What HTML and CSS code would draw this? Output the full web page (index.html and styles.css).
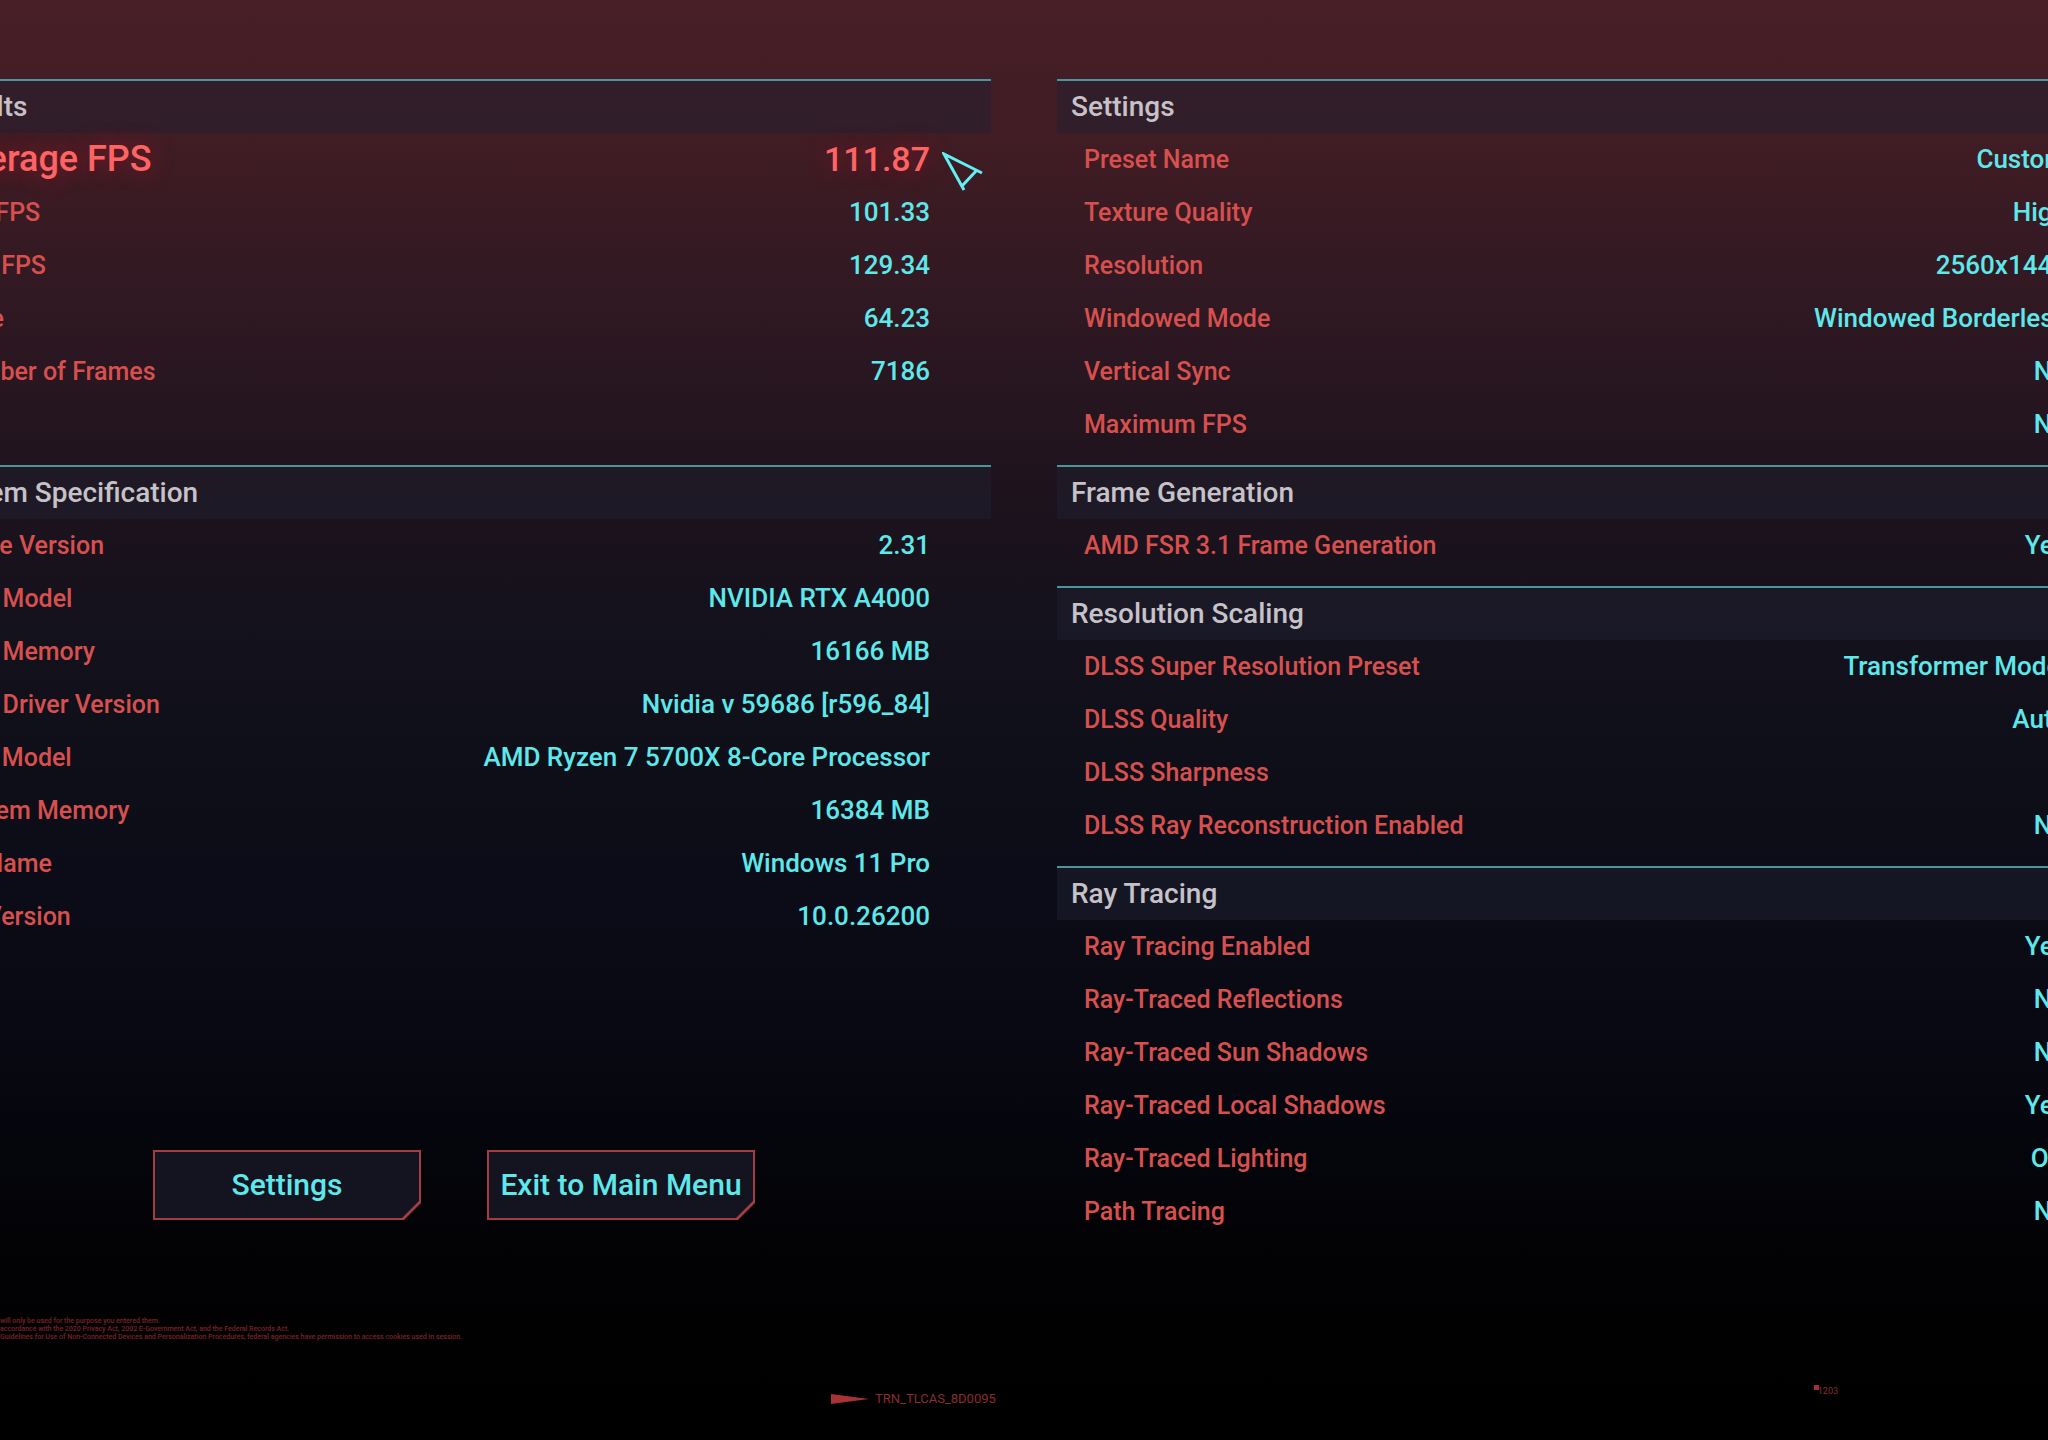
FILE: index.html
```
<!DOCTYPE html>
<html lang="en">
<head>
  <meta charset="utf-8">
  <title>Benchmark Results</title>
  <link rel="stylesheet" href="styles.css">
</head>
<body>
  <main class="screen">
    <div class="columns">
      <div class="column">
        <section class="panel panel-results">
          <h2>Results</h2>
          <dl>
            <div class="row highlight"><dt>Average FPS</dt><dd>111.87</dd></div>
            <div class="row"><dt>Min FPS</dt><dd>101.33</dd></div>
            <div class="row"><dt>Max FPS</dt><dd>129.34</dd></div>
            <div class="row"><dt>Time</dt><dd>64.23</dd></div>
            <div class="row"><dt>Number of Frames</dt><dd>7186</dd></div>
          </dl>
        </section>
        <section class="panel">
          <h2>System Specification</h2>
          <dl>
            <div class="row"><dt>Game Version</dt><dd>2.31</dd></div>
            <div class="row"><dt>GPU Model</dt><dd>NVIDIA RTX A4000</dd></div>
            <div class="row"><dt>GPU Memory</dt><dd>16166 MB</dd></div>
            <div class="row"><dt>GPU Driver Version</dt><dd>Nvidia v 59686 [r596_84]</dd></div>
            <div class="row"><dt>CPU Model</dt><dd>AMD Ryzen 7 5700X 8-Core Processor</dd></div>
            <div class="row"><dt>System Memory</dt><dd>16384 MB</dd></div>
            <div class="row"><dt>OS Name</dt><dd>Windows 11 Pro</dd></div>
            <div class="row"><dt>OS Version</dt><dd>10.0.26200</dd></div>
          </dl>
        </section>
        <div class="actions">
          <button type="button"><span>Settings</span></button>
          <button type="button"><span>Exit to Main Menu</span></button>
        </div>
      </div>

      <div class="column">
        <section class="panel">
          <h2>Settings</h2>
          <dl>
            <div class="row"><dt>Preset Name</dt><dd>Custom</dd></div>
            <div class="row"><dt>Texture Quality</dt><dd>High</dd></div>
            <div class="row"><dt>Resolution</dt><dd>2560x1440</dd></div>
            <div class="row"><dt>Windowed Mode</dt><dd>Windowed Borderless</dd></div>
            <div class="row"><dt>Vertical Sync</dt><dd>No</dd></div>
            <div class="row"><dt>Maximum FPS</dt><dd>No</dd></div>
          </dl>
        </section>
        <section class="panel">
          <h2>Frame Generation</h2>
          <dl>
            <div class="row"><dt>AMD FSR 3.1 Frame Generation</dt><dd>Yes</dd></div>
          </dl>
        </section>
        <section class="panel">
          <h2>Resolution Scaling</h2>
          <dl>
            <div class="row"><dt>DLSS Super Resolution Preset</dt><dd>Transformer Model</dd></div>
            <div class="row"><dt>DLSS Quality</dt><dd>Auto</dd></div>
            <div class="row"><dt>DLSS Sharpness</dt><dd></dd></div>
            <div class="row"><dt>DLSS Ray Reconstruction Enabled</dt><dd>No</dd></div>
          </dl>
        </section>
        <section class="panel">
          <h2>Ray Tracing</h2>
          <dl>
            <div class="row"><dt>Ray Tracing Enabled</dt><dd>Yes</dd></div>
            <div class="row"><dt>Ray-Traced Reflections</dt><dd>No</dd></div>
            <div class="row"><dt>Ray-Traced Sun Shadows</dt><dd>No</dd></div>
            <div class="row"><dt>Ray-Traced Local Shadows</dt><dd>Yes</dd></div>
            <div class="row"><dt>Ray-Traced Lighting</dt><dd>Off</dd></div>
            <div class="row"><dt>Path Tracing</dt><dd>No</dd></div>
          </dl>
        </section>
      </div>
    </div>

    <div class="legal">
      <p>will only be used for the purpose you entered them.</p>
      <p>accordance with the 2020 Privacy Act, 2002 E-Government Act, and the Federal Records Act.</p>
      <p>Guidelines for Use of Non-Connected Devices and Personalization Procedures, federal agencies have permission to access cookies used in session.</p>
    </div>

    <footer class="footer">
      <div class="code">
        <svg width="38" height="10" viewBox="0 0 38 10"><path d="M0 0L38 5L0 10Z"/></svg>
        TRN_TLCAS_8D0095
      </div>
      <div class="tag">1203</div>
    </footer>
  </main>

  <!-- pointer -->
  <svg class="cursor" viewBox="0 0 42 40">
    <path d="M22 38L2 2L40 21M35 18L20 34"/>
  </svg>
</body>
</html>
```
FILE: styles.css
```
* {
  box-sizing: border-box;
  margin: 0;
  padding: 0;
}

body {
  min-height: 100vh;
  overflow: hidden;
  background: linear-gradient(#481f27 0%, #401c24 10%, #2e1822 22%, #1f131d 33%, #12111c 45%, #0b0c17 62%, #06070f 76%, #020204 88%, #000 100%);
  color: #5ee8ea;
  font-family: Roboto, "Liberation Sans", sans-serif;
  font-weight: 500;
}

.screen {
  padding-top: 79px;
}

/* the panels run past both sides of the window */
.columns {
  display: grid;
  grid-template-columns: 1fr 1fr;
  gap: 66px;
  margin: 0 -80px;
}

.panel {
  padding-bottom: 14px;
}

.panel-results {
  min-height: 386px;
}

.panel h2 {
  height: 54px;
  padding-left: 14px;
  border-top: 2px solid #4b9699;
  background: rgba(32, 32, 48, 0.5);
  color: #c6c2c8;
  font-size: 28px;
  font-weight: 500;
  line-height: 52px;
}

.row {
  display: flex;
  justify-content: space-between;
  height: 53px;
  padding: 0 61px 0 27px;
  font-size: 26px;
  line-height: 53px;
  white-space: nowrap;
}

.row dt {
  color: #d8504e;
  font-size: 25px;
}

.highlight dt,
.highlight dd {
  color: #ff6464;
  text-shadow: 0 0 24px rgba(255, 30, 50, 0.4);
}

.highlight dt {
  font-size: 36px;
}

.highlight dd {
  font-size: 34px;
}

.actions {
  display: flex;
  gap: 66px;
  margin-top: 193px;
  padding-left: 233px;
}

.actions button {
  width: 268px;
  height: 70px;
  padding: 2px;
  border: none;
  background: #a33c43;
  color: #5ee8ea;
  font-family: inherit;
  font-size: 30px;
  font-weight: 500;
  cursor: pointer;
}

.actions span {
  display: block;
  background: #141320;
  line-height: 66px;
}

.actions button,
.actions span {
  clip-path: polygon(0 0, 100% 0, 100% calc(100% - 17px), calc(100% - 17px) 100%, 0 100%);
}

.actions button:hover {
  background: #ff6464;
}

.legal {
  margin-top: 65px;
  color: #7a2226;
  font-size: 7px;
  line-height: 8px;
  white-space: nowrap;
}

.footer {
  display: flex;
  justify-content: space-between;
  margin-top: 44px;
  padding: 0 210px 0 831px;
  color: #8c2c2f;
  font-size: 13px;
  font-weight: 400;
}

.code {
  display: flex;
  align-items: center;
  gap: 6px;
  padding-top: 6px;
}

.code svg {
  fill: #a83236;
}

.tag {
  padding-left: 4px;
  font-size: 9px;
  line-height: 12px;
  background: linear-gradient(#9c3338, #9c3338) 0 0 / 5px 5px no-repeat;
}

.cursor {
  position: absolute;
  top: 152px;
  left: 942px;
  width: 42px;
  height: 40px;
  fill: none;
  stroke: #62f0f2;
  stroke-width: 3;
}
```
